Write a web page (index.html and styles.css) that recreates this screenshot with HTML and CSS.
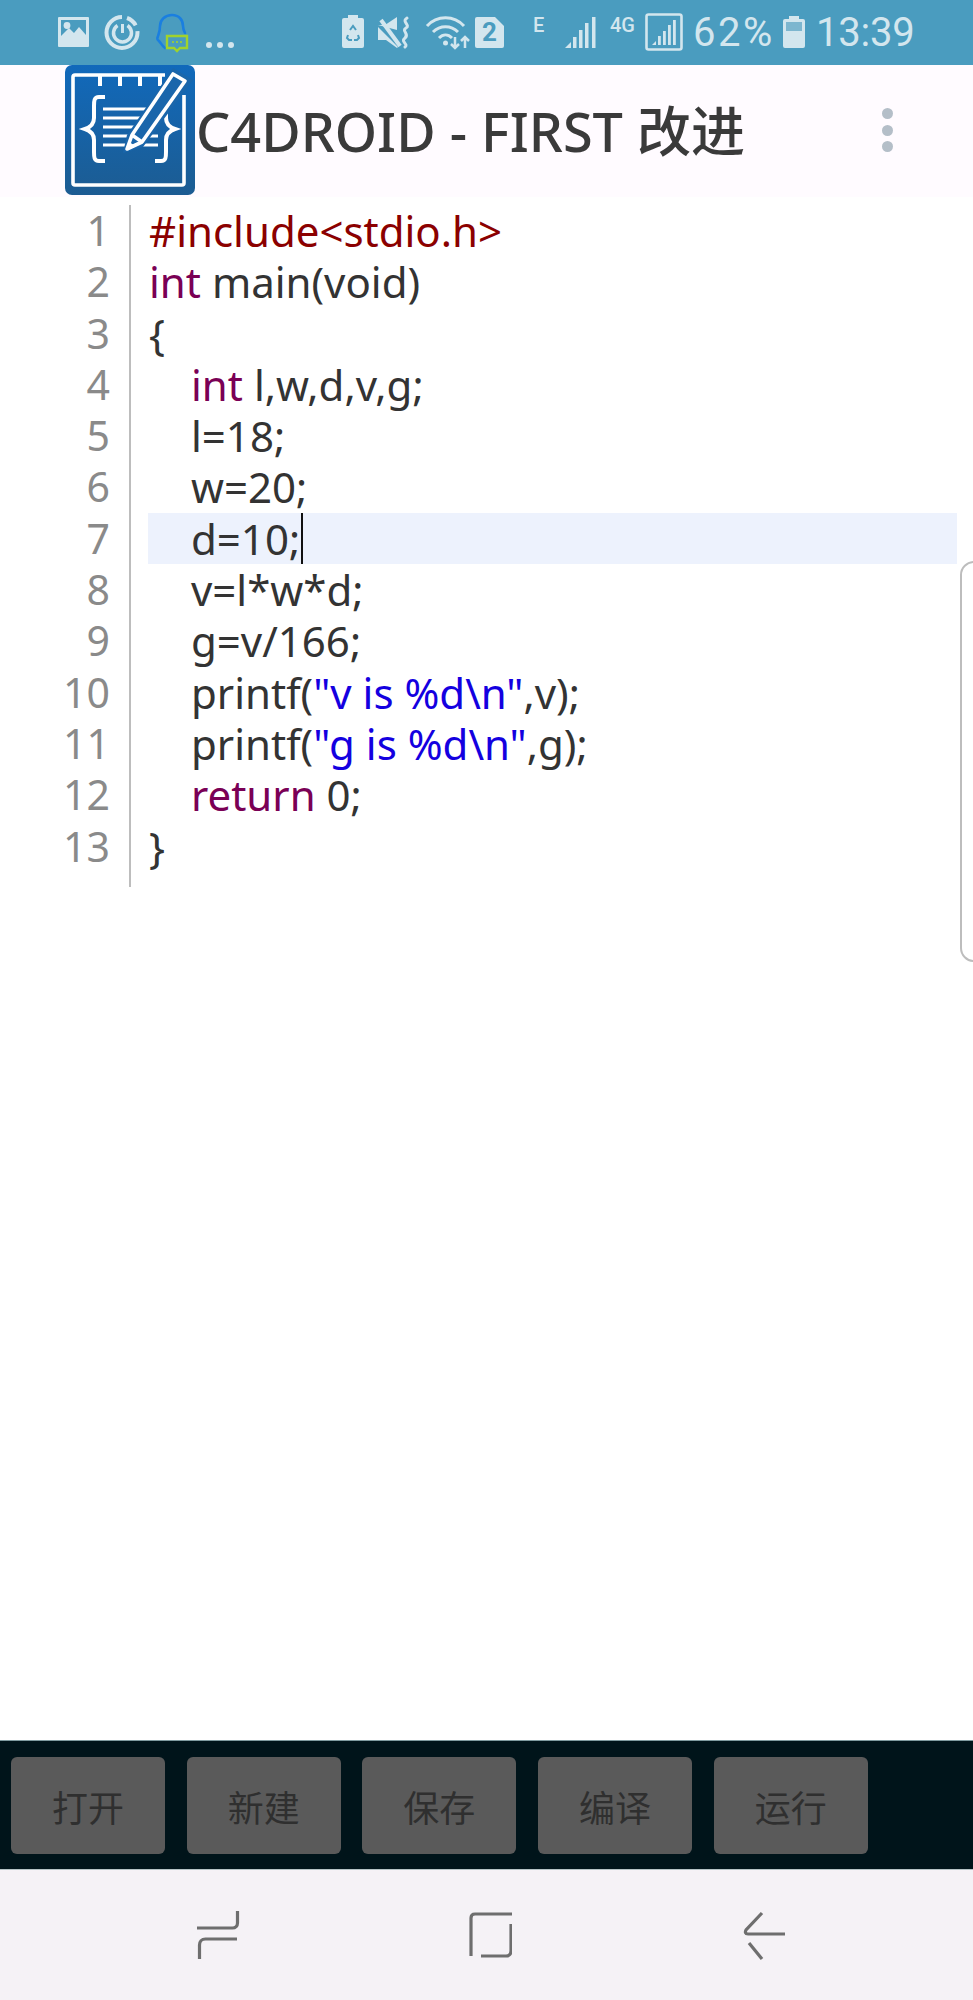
FILE: index.html
```html
<!DOCTYPE html>
<html lang="zh">
<head>
<meta charset="utf-8">
<title>C4droid</title>
<link rel="stylesheet" href="styles.css">
</head>
<body>
<div class="phone">
  <header class="status">
    <svg class="si m-image" width="31" height="65" viewBox="0 0 31 65"><path fill="#d3e6ee" fill-rule="evenodd" d="M1 17h29a1 1 0 0 1 1 1v28a1 1 0 0 1-1 1H1a1 1 0 0 1-1-1V18a1 1 0 0 1 1-1zm2 3v16l8-8 5 5 5-6 7 8V20z"/><circle cx="9" cy="25.5" r="3.4" fill="#d3e6ee"/></svg>
    <svg class="si m-ring" width="35" height="65" viewBox="0 0 35 65"><g fill="none" stroke="#d3e6ee"><path stroke-width="4" d="M17 17a15.500 15.500 0 1 0 15.500 15.500A15.500 15.500 0 0 0 22 18" stroke-dasharray="74 6"/><path stroke-width="3.500" d="M12.500 25.500a9 9 0 1 0 10 0"/><path stroke-width="3" d="M17.500 24v9"/></g></svg>
    <svg class="si m-qq" width="33" height="65" viewBox="0 0 33 65"><path fill="none" stroke="#1a7fe0" stroke-width="2.600" stroke-linecap="round" d="M9 48c-3-2-4-5-6-7-2-1-2-3-1-5 1-3 2-5 2-10 0-6 5-11 12-11s11 5 11 11c0 3 1 5 2 7"/><path fill="#4a9cbf" stroke="#a0d22c" stroke-width="2.400" d="M11 36h20v12h-7l-3 3-3-3h-7z"/><g fill="#a0d22c"><circle cx="17" cy="42" r="1.100"/><circle cx="21" cy="42" r="1.100"/><circle cx="25" cy="42" r="1.100"/></g></svg>
    <svg class="si m-dots" width="28" height="65" viewBox="0 0 28 65"><g fill="#d3e6ee"><circle cx="3" cy="45" r="3"/><circle cx="14" cy="45" r="3"/><circle cx="25" cy="45" r="3"/></g></svg>
    <svg class="si m-recycle" width="22" height="65" viewBox="0 0 22 65"><path fill="#d3e6ee" d="M6 15h10v3h4a2 2 0 0 1 2 2v26a2 2 0 0 1-2 2H2a2 2 0 0 1-2-2V20a2 2 0 0 1 2-2h4z"/><g fill="none" stroke="#4a9cbf" stroke-width="2"><path d="M8 30l3-4 3 4"/><path d="M6 35l-1 3 2 2h3"/><path d="M16 35l1 3-2 2h-3"/></g></svg>
    <svg class="si m-mute" width="34" height="65" viewBox="0 0 34 65"><path fill="#d3e6ee" d="M0 25h7l12-8v13z"/><path fill="#d3e6ee" d="M0 27l20 20-1 1L8 40H0z"/><path fill="none" stroke="#d3e6ee" stroke-width="4" d="M3 20l19 26"/><path fill="none" stroke="#d3e6ee" stroke-width="3" stroke-linecap="round" d="M29 18c-6 4 4 7-1 10s4 6-1 10 4 6 0 9"/></svg>
    <svg class="si m-wifi" width="44" height="65" viewBox="0 0 44 65"><g fill="none" stroke="#d3e6ee" stroke-width="3"><path d="M1 26c10-11 27-11 37 0"/><path d="M7 32c7-7 18-7 25 0"/><path d="M13 38c4-4 9-4 13 0"/></g><circle cx="19.500" cy="43" r="2.500" fill="#d3e6ee"/><path fill="none" stroke="#d3e6ee" stroke-width="2.500" d="M29 37v11m-4-4 4 4 4-4M39 48V37m-4 4 4-4 4 4"/></svg>
    <svg class="si m-sim" width="29" height="65" viewBox="0 0 29 65"><path fill="#d3e6ee" d="M2 17h18l9 9v20a2 2 0 0 1-2 2H2a2 2 0 0 1-2-2V19a2 2 0 0 1 2-2z"/></svg>
    <span class="sim-num">2</span>
    <span class="net m-e">E</span>
    <svg class="si m-signal" width="32" height="65" viewBox="0 0 32 65"><g fill="#d3e6ee"><path d="M0 48l6-6v6z"/><rect x="8" y="37" width="3.500" height="11"/><rect x="14" y="30" width="3.500" height="18"/><rect x="20" y="23" width="3.500" height="25"/><rect x="27" y="17" width="3.500" height="31"/></g></svg>
    <span class="net m-4g">4G</span>
    <svg class="si m-box" width="38" height="65" viewBox="0 0 38 65"><rect x="1.500" y="14.500" width="35" height="35" rx="2" fill="none" stroke="#d3e6ee" stroke-width="2.600"/><g fill="#d3e6ee"><path d="M7 45l4-4v4z"/><rect x="13" y="36" width="2.800" height="9"/><rect x="18" y="31" width="2.800" height="14"/><rect x="23" y="25" width="2.800" height="20"/><rect x="28" y="20" width="2.800" height="25"/></g></svg>
    <span class="stext m-pct">62%</span>
    <svg class="si m-batt" width="22" height="65" viewBox="0 0 22 65"><path fill="#d3e6ee" d="M6 16h10v3h4a2 2 0 0 1 2 2v25a2 2 0 0 1-2 2H2a2 2 0 0 1-2-2V21a2 2 0 0 1 2-2h4z"/><rect x="3" y="22" width="16" height="9" fill="#7db6cf"/></svg>
    <span class="stext m-time">13:39</span>
  </header>

  <div class="appbar">
    <svg class="logo" width="130" height="130" viewBox="0 0 130 130">
      <defs><linearGradient id="lg" x1="0" y1="0" x2="0" y2="1"><stop offset="0" stop-color="#1169bb"/><stop offset="1" stop-color="#1c5c92"/></linearGradient></defs>
      <rect width="130" height="130" rx="7" fill="url(#lg)"/>
      <g fill="none" stroke="#fff" stroke-width="3.600">
        <path d="M119 30v88a2 2 0 0 1-2 2H10a2 2 0 0 1-2-2V12a2 2 0 0 1 2-2h90"/>
        <path stroke-width="4" d="M35 10v11M55 10v11M75 10v11M95 10v11"/>
        <path stroke-width="4" d="M40 32h-6c-5 0-5 4-5 9v12c0 6-3 9-9 11 6 2 9 5 9 11v12c0 5 0 9 5 9h6"/>
        <path stroke-width="4" d="M90 32h6c5 0 5 4 5 9v12c0 6 3 9 9 11-6 2-9 5-9 11v12c0 5 0 9-5 9h-6"/>
        <path stroke-width="3" d="M38 44h52M38 53h48M38 62h42M38 71h34M38 80h28M80 71h13M72 80h21"/>
      </g>
      <path d="M58 88l4-18L108 3l20 12-50 67z" fill="#1a66ab"/>
      <path d="M62 84l5-14L108 9l12 7-43 61z" fill="#1a66ab" stroke="#fff" stroke-width="3.600" stroke-linejoin="round"/>
      <path d="M67 70l10 7" stroke="#fff" stroke-width="3.600"/>
      <path d="M62 84l2-7 5 3z" fill="#fff"/>
    </svg>
    <h1 class="title">C4DROID - FIRST 改进</h1>
    <div class="more" aria-label="more"><i></i><i></i><i></i></div>
  </div>

  <main class="editor">
    <div class="gutter"><div>1</div><div>2</div><div>3</div><div>4</div><div>5</div><div>6</div><div>7</div><div>8</div><div>9</div><div>10</div><div>11</div><div>12</div><div>13</div></div>
    <div class="code">
      <div class="ln"><span class="pp">#include&lt;stdio.h&gt;</span></div>
      <div class="ln"><span class="kw">int</span> main(void)</div>
      <div class="ln">{</div>
      <div class="ln in"><span class="kw">int</span> l,w,d,v,g;</div>
      <div class="ln in">l=18;</div>
      <div class="ln in">w=20;</div>
      <div class="ln in cur">d=10;<span class="caret"></span></div>
      <div class="ln in">v=l*w*d;</div>
      <div class="ln in">g=v/166;</div>
      <div class="ln in">printf(<span class="str">"v is %d\n"</span>,v);</div>
      <div class="ln in">printf(<span class="str">"g is %d\n"</span>,g);</div>
      <div class="ln in"><span class="kw">return</span> 0;</div>
      <div class="ln">}</div>
    </div>
    <div class="handle"></div>
  </main>

  <div class="toolbar">
    <button class="btn">打开</button>
    <button class="btn">新建</button>
    <button class="btn">保存</button>
    <button class="btn">编译</button>
    <button class="btn">运行</button>
  </div>

  <nav class="navbar">
    <svg class="nav-recent" width="44" height="50" viewBox="0 0 44 50"><path d="M39.500 1v12c0 3-2 5-5 5H-1" transform="translate(2 0)" fill="none" stroke="#6e6e6e" stroke-width="3.200"/><path d="M3.500 49V35c0-3 2-6 6-6H41" fill="none" stroke="#6e6e6e" stroke-width="3.200"/></svg>
    <svg class="nav-home" width="44" height="50" viewBox="0 0 44 50"><path d="M3 46V8c0-3 2-4 4-4h37" fill="none" stroke="#6e6e6e" stroke-width="3.200"/><path d="M43 14v27c0 3-2 5-5 5H13" fill="none" stroke="#6e6e6e" stroke-width="3.200"/></svg>
    <svg class="nav-back" width="44" height="50" viewBox="0 0 44 50"><path d="M43 24H6c-3 0-3-2-2-4L20 3" fill="none" stroke="#6e6e6e" stroke-width="3.200"/><path d="M7 33l13 16" fill="none" stroke="#6e6e6e" stroke-width="3.200"/></svg>
  </nav>
</div>
</body>
</html>
```
FILE: styles.css
```css
* { box-sizing: border-box; }
html, body { margin: 0; padding: 0; background: #fff; }
.phone {
  position: relative;
  width: 973px;
  height: 2000px;
  display: flex;
  flex-direction: column;
  overflow: hidden;
  font-family: "Noto Sans", "Noto Sans CJK SC", sans-serif;
}

/* status bar */
.status {
  flex: none;
  height: 65px;
  background: #4a9cbf;
  display: flex;
  align-items: flex-start;
  color: #d3e6ee;
  overflow: hidden;
}
.si { flex: none; display: block; overflow: visible; }
.m-image { margin-left: 58px; }
.m-ring { margin-left: 16px; }
.m-qq { margin-left: 16px; }
.m-dots { margin-left: 17px; }
.m-recycle { margin-left: 108px; }
.m-mute { margin-left: 14px; }
.m-wifi { margin-left: 14px; }
.m-sim { margin-left: 5px; }
.sim-num {
  flex: none;
  width: 29px;
  margin-left: -29px;
  height: 65px;
  text-align: center;
  font: 700 26px/65px "Roboto", sans-serif;
  color: #4a9cbf;
}
.net {
  flex: none;
  font: 500 20px/50px "Roboto", sans-serif;
  height: 50px;
}
.m-e { margin-left: 29px; width: 14px; }
.m-signal { margin-left: 18px; }
.m-4g { margin-left: 13px; width: 28px; }
.m-box { margin-left: 7px; }
.stext {
  flex: none;
  font: 400 40px/65px "Roboto", sans-serif;
  height: 65px;
}
.m-pct { margin-left: 10px; width: 80px; letter-spacing: 2.500px; }
.m-batt { margin-left: 10px; }
.m-time { margin-left: 11px; letter-spacing: -0.200px; }

/* app bar */
.appbar {
  flex: none;
  height: 132px;
  background: #fffbff;
  display: flex;
  align-items: flex-start;
  padding-left: 65px;
}
.logo { flex: none; display: block; }
.title {
  margin: 0 0 0 1px;
  font-size: 54px;
  font-weight: 500;
  line-height: 132px;
  height: 132px;
  color: #3a3a3a;
  white-space: nowrap;
  width: 686px;
}
.more {
  display: flex;
  flex-direction: column;
  gap: 5.500px;
  margin-top: 43px;
}
.more i {
  display: block;
  width: 11px;
  height: 11px;
  border-radius: 50%;
  background: #b4bec8;
}

/* editor */
.editor {
  flex: 1;
  position: relative;
  background: #fff;
  display: flex;
  align-items: flex-start;
  padding-top: 8px;
  font-size: 42px;
  line-height: 51.300px;
  color: #333;
}
.gutter {
  flex: none;
  width: 131px;
  padding: 0 19px 15px 0;
  border-right: 2px solid #bdbdbd;
  text-align: right;
  color: #8a8a8a;
  font-size: 41px;
}
.code { flex: none; width: 809px; margin-left: 17px; }
.ln { height: 51.300px; padding-left: 1px; white-space: pre; }
.ln.in { padding-left: 43px; }
.ln.cur { background: #edf2fd; }
.caret {
  display: inline-block;
  width: 2px;
  height: 51px;
  margin-left: 1px;
  background: #111;
  vertical-align: top;
}
.pp { color: #8b0000; }
.kw { color: #7a0055; }
.str { color: #1400e0; }
.handle {
  position: absolute;
  left: 960px;
  top: 364px;
  width: 30px;
  height: 401px;
  border: 2px solid #bdbdbd;
  border-radius: 14px;
  background: #fff;
}

/* toolbar */
.toolbar {
  flex: none;
  height: 130px;
  background: #00141a;
  border-top: 1px solid #7f9a9f;
  border-bottom: 1px solid #b5c3c6;
  display: flex;
  gap: 21.700px;
  padding: 16px 0 0 11px;
}
.btn {
  width: 154px;
  height: 97px;
  border: 0;
  padding: 0;
  border-radius: 6px;
  background: #5a5a5a;
  color: #2f2f2f;
  font-family: "Noto Sans CJK SC", sans-serif;
  font-size: 36px;
}

/* nav bar */
.navbar {
  flex: none;
  height: 130px;
  background: #f5f2f6;
  display: flex;
  align-items: flex-start;
  padding-top: 40px;
}
.navbar svg { flex: none; display: block; }
.nav-recent { margin-left: 196px; }
.nav-home { margin-left: 228px; }
.nav-back { margin-left: 230px; }
```
